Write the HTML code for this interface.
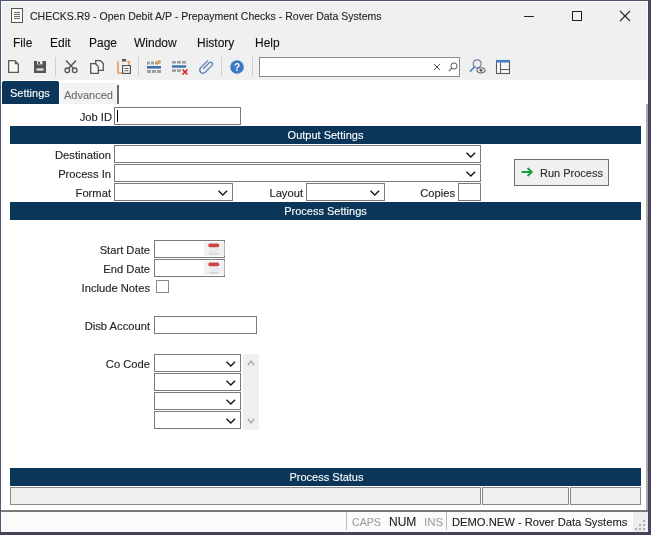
<!DOCTYPE html>
<html><head><meta charset="utf-8">
<style>
*{box-sizing:border-box;margin:0;padding:0}
html,body{will-change:transform;width:651px;height:535px;overflow:hidden;background:#f0f0f0;font-family:"Liberation Sans",sans-serif;color:#222}
.a{position:absolute}
.t{-webkit-text-stroke:0.1px currentColor;position:absolute;white-space:nowrap;font-size:11px;line-height:13px}
.l{-webkit-text-stroke:0.15px #262626;position:absolute;white-space:nowrap;font-size:11.2px;line-height:13px;color:#262626;text-align:right;width:140px}
.b{position:absolute;background:#fff;border:1px solid #7a7a7a}
.h{-webkit-text-stroke:0.1px #fff;position:absolute;left:10px;width:631px;height:18px;background:#0b3659;color:#fff;font-size:11px;line-height:18px;text-align:center}
.sep{position:absolute;top:57px;width:1px;height:19px;background:#cfcfcf}
svg{position:absolute;overflow:visible}
</style></head><body>
<!-- window frame -->
<div class="a" style="left:0;top:0;width:651px;height:1px;background:#4e566c"></div>
<div class="a" style="left:0;top:0;width:1px;height:535px;background:#4a5a78"></div>
<div class="a" style="left:648px;top:0;width:3px;height:535px;background:#4a4560"></div>
<div class="a" style="left:0;top:532px;width:651px;height:3px;background:#4a4058"></div>

<!-- title -->
<svg style="left:11px;top:8px" width="12" height="15" viewBox="0 0 12 15">
<rect x="0.5" y="0.5" width="11" height="14" fill="#fafafa" stroke="#555"/>
<path d="M3 4.5h6M3 6.5h6M3 8.5h6M3 10.5h6" stroke="#666" stroke-width="1"/>
</svg>
<div class="t" style="left:30px;top:9px;font-size:11.6px;line-height:14px;transform:scaleX(0.907);transform-origin:0 0;color:#222">CHECKS.R9 - Open Debit A/P - Prepayment Checks - Rover Data Systems</div>
<div class="a" style="left:524px;top:16px;width:10px;height:1px;background:#222"></div>
<div class="a" style="left:572px;top:11px;width:10px;height:10px;border:1px solid #222"></div>
<svg style="left:620px;top:11px" width="10" height="10" viewBox="0 0 10 10"><path d="M0 0L10 10M10 0L0 10" stroke="#222" stroke-width="1.1"/></svg>

<!-- menu -->
<div class="t" style="left:13px;top:37px;font-size:12px;color:#111">File</div>
<div class="t" style="left:50px;top:37px;font-size:12px;color:#111">Edit</div>
<div class="t" style="left:89px;top:37px;font-size:12px;color:#111">Page</div>
<div class="t" style="left:134px;top:37px;font-size:12px;color:#111">Window</div>
<div class="t" style="left:197px;top:37px;font-size:12px;color:#111">History</div>
<div class="t" style="left:255px;top:37px;font-size:12px;color:#111">Help</div>

<!-- toolbar icons -->
<svg style="left:8px;top:60px" width="11" height="13" viewBox="0 0 11 13"><path d="M0.65 0.65H6.8L10.35 4.2V12.35H0.65Z" fill="#f8f8f8" stroke="#5a5a5a" stroke-width="1.3"/><path d="M6.8 0.65V4.2H10.35Z" fill="#5a5a5a"/></svg>
<svg style="left:34px;top:61px" width="12" height="12" viewBox="0 0 12 12"><path d="M0 0H12V12H0Z" fill="#555"/><rect x="3" y="0" width="5.5" height="3.4" fill="#e8e8e8"/><rect x="4" y="0.7" width="2" height="2.2" fill="#555"/><rect x="2.5" y="7.4" width="7" height="2.2" fill="#e8e8e8"/></svg>
<div class="sep" style="left:55px"></div>
<svg style="left:64px;top:60px" width="14" height="14" viewBox="0 0 14 14"><path d="M2 0.5L9.5 8.5M12 0.5L4.5 8.5" stroke="#555" stroke-width="1.4"/><circle cx="3.3" cy="10.3" r="2.3" fill="none" stroke="#555" stroke-width="1.3"/><circle cx="10.7" cy="10.3" r="2.3" fill="none" stroke="#555" stroke-width="1.3"/></svg>
<svg style="left:90px;top:60px" width="14" height="14" viewBox="0 0 14 14"><path d="M5.7 0.7H10.5L13.3 3.5V10.3H5.7Z" fill="#f4f4f4" stroke="#555" stroke-width="1.3"/><path d="M0.7 3.7H5.5L8.3 6.5V13.3H0.7Z" fill="#f4f4f4" stroke="#555" stroke-width="1.3"/></svg>
<svg style="left:117px;top:59px" width="14" height="15" viewBox="0 0 14 15"><path d="M1 2.5V14H5M10 2.5H12V6" fill="none" stroke="#e0a050" stroke-width="1.6"/><rect x="5" y="0" width="4" height="2.5" fill="#555"/><rect x="5.6" y="6.6" width="7.8" height="7.8" fill="#fff" stroke="#555" stroke-width="1.2"/><path d="M7.5 9.5H11.5M7.5 11.7H11.5" stroke="#555" stroke-width="1"/></svg>
<div class="sep" style="left:138px"></div>
<svg style="left:146px;top:60px" width="16" height="14" viewBox="0 0 16 14"><rect x="1" y="1.5" width="3" height="3" fill="#a0a0a0"/><rect x="5" y="1.5" width="3" height="3" fill="#a0a0a0"/><rect x="9" y="1.5" width="3" height="3" fill="#a0a0a0"/><circle cx="13" cy="2" r="2" fill="#e8a050"/><rect x="1" y="6" width="14" height="2.6" fill="#3d6fb0"/><rect x="1" y="10" width="4" height="3" fill="#a0a0a0"/><rect x="6" y="10" width="4" height="3" fill="#a0a0a0"/><rect x="11" y="10" width="4" height="3" fill="#a0a0a0"/></svg>
<svg style="left:171px;top:60px" width="18" height="15" viewBox="0 0 18 15"><rect x="1" y="1" width="4" height="2.6" fill="#a0a0a0"/><rect x="6" y="1" width="4" height="2.6" fill="#a0a0a0"/><rect x="11" y="1" width="4" height="2.6" fill="#a0a0a0"/><rect x="1" y="5.3" width="14" height="2.4" fill="#3d6fb0"/><rect x="1" y="9.3" width="4" height="2.6" fill="#a0a0a0"/><rect x="6" y="9.3" width="4" height="2.6" fill="#a0a0a0"/><path d="M11.5 9.5L16.5 14.5M16.5 9.5L11.5 14.5" stroke="#d0202a" stroke-width="1.6"/></svg>
<svg style="left:199px;top:59px" width="15" height="15" viewBox="0 0 15 15"><path d="M4.5 9.5L10.3 3.7A1.9 1.9 0 0 1 13 6.4L6 13.4A3.2 3.2 0 0 1 1.5 8.9L8.5 1.9" fill="none" stroke="#5b80b8" stroke-width="1.3" stroke-linecap="round"/></svg>
<div class="sep" style="left:221px"></div>
<svg style="left:230px;top:60px" width="14" height="14" viewBox="0 0 14 14"><circle cx="7" cy="7" r="6.8" fill="#3a78c4"/><text x="7" y="11" font-family="Liberation Sans" font-weight="bold" font-size="10" text-anchor="middle" fill="#fff">?</text></svg>
<div class="sep" style="left:252px"></div>
<div class="a" style="left:259px;top:57px;width:201px;height:20px;background:#fff;border:1px solid #8a8a8a"></div>
<svg style="left:434px;top:64px" width="6" height="6" viewBox="0 0 6 6"><path d="M0 0L6 6M6 0L0 6" stroke="#555" stroke-width="1"/></svg>
<svg style="left:448px;top:62px" width="10" height="10" viewBox="0 0 10 10"><circle cx="6" cy="4" r="3.1" fill="none" stroke="#555" stroke-width="1"/><path d="M3.8 6.2L0.8 9.2" stroke="#555" stroke-width="1.1"/></svg>
<svg style="left:469px;top:59px" width="17" height="15" viewBox="0 0 17 15"><circle cx="8.2" cy="4.8" r="4" fill="none" stroke="#6f84a0" stroke-width="1.2"/><path d="M5.3 8L1.5 12.2" stroke="#4a86c6" stroke-width="1.8" stroke-linecap="round"/><ellipse cx="12" cy="11.3" rx="4" ry="2.6" fill="#f0f0f0" stroke="#6a6a6a" stroke-width="1.1"/><circle cx="12" cy="11.3" r="1.4" fill="#555"/></svg>
<svg style="left:496px;top:60px" width="14" height="14" viewBox="0 0 14 14"><rect x="0.5" y="0.5" width="13" height="13" fill="#f6f6f6" stroke="#5a5a5a" stroke-width="1.1"/><rect x="0" y="0" width="14" height="2.5" fill="#3f7cc4"/><path d="M4.5 2.5V13.4M4.5 9.5H13.4" stroke="#5a5a5a" stroke-width="1"/></svg>

<!-- content -->
<div class="a" style="left:1px;top:80px;width:647px;height:430px;background:#fff"></div>
<div class="a" style="left:2px;top:81px;width:57px;height:23px;background:#0b3659;border-radius:2px 2px 0 0"></div>
<div class="t" style="left:10px;top:87px;color:#fff;font-size:11px">Settings</div>
<div class="a" style="left:60px;top:83px;width:57px;height:21px;background:#f3f3f3"></div>
<div class="a" style="left:117px;top:85px;width:2px;height:19px;background:#6a6a6a"></div>
<div class="t" style="left:64px;top:89px;color:#6d6d6d;font-size:11px">Advanced</div>

<div class="l" style="left:-28px;top:111px">Job ID</div>
<div class="b" style="left:114px;top:107px;width:127px;height:18px"></div>
<div class="a" style="left:117px;top:110px;width:1px;height:12px;background:#000"></div>

<div class="h" style="top:126px">Output Settings</div>
<div class="l" style="left:-29px;top:149px">Destination</div>
<div class="b" style="left:114px;top:145px;width:367px;height:18px"></div>
<div class="l" style="left:-29px;top:168px">Process In</div>
<div class="b" style="left:114px;top:164px;width:367px;height:18px"></div>
<div class="l" style="left:-29px;top:187px">Format</div>
<div class="b" style="left:114px;top:183px;width:119px;height:18px"></div>
<div class="l" style="left:163px;top:187px">Layout</div>
<div class="b" style="left:306px;top:183px;width:79px;height:18px"></div>
<div class="l" style="left:315px;top:187px">Copies</div>
<div class="b" style="left:458px;top:183px;width:23px;height:18px"></div>

<div class="a" style="left:514px;top:159px;width:95px;height:27px;background:#f0f0f0;border:1px solid #707070"></div>
<svg style="left:521px;top:167px" width="12" height="10" viewBox="0 0 12 10"><path d="M0.5 5H10.5M6.5 1L10.8 5L6.5 9" fill="none" stroke="#1f9a3a" stroke-width="1.8"/></svg>
<div class="t" style="left:540px;top:167px;color:#2a2a2a;font-size:11px">Run Process</div>

<div class="h" style="top:202px">Process Settings</div>
<div class="l" style="left:10px;top:244px">Start Date</div>
<div class="b" style="left:154px;top:240px;width:71px;height:18px"></div>
<div class="l" style="left:10px;top:263px">End Date</div>
<div class="b" style="left:154px;top:259px;width:71px;height:18px"></div>
<div class="l" style="left:10px;top:282px">Include Notes</div>
<div class="a" style="left:156px;top:280px;width:13px;height:13px;background:#fff;border:1px solid #8a8a8a"></div>
<div class="l" style="left:10px;top:320px">Disb Account</div>
<div class="b" style="left:154px;top:316px;width:103px;height:18px"></div>
<div class="l" style="left:10px;top:358px">Co Code</div>
<div class="b" style="left:154px;top:354px;width:87px;height:18px"></div>
<div class="b" style="left:154px;top:373px;width:87px;height:18px"></div>
<div class="b" style="left:154px;top:392px;width:87px;height:18px"></div>
<div class="b" style="left:154px;top:411px;width:87px;height:18px"></div>
<div class="a" style="left:243px;top:354px;width:16px;height:76px;background:#f0f0f0"></div>

<div class="h" style="top:468px;padding-left:2px">Process Status</div>
<div class="a" style="left:10px;top:487px;width:471px;height:18px;background:#f0f0f0;border:1px solid #8a8a8a"></div>
<div class="a" style="left:482px;top:487px;width:87px;height:18px;background:#f0f0f0;border:1px solid #8a8a8a"></div>
<div class="a" style="left:570px;top:487px;width:71px;height:18px;background:#f0f0f0;border:1px solid #8a8a8a"></div>

<div class="a" style="left:646px;top:104px;width:2px;height:406px;background:#aaaaaa"></div>
<div class="a" style="left:1px;top:1px;width:647px;height:1px;background:#fbfbfd"></div>
<div class="a" style="left:1px;top:1px;width:1px;height:79px;background:#fbfbfd"></div>
<div class="a" style="left:647px;top:1px;width:1px;height:103px;background:#fbfbfd"></div>
<!-- status bar -->
<div class="a" style="left:1px;top:510px;width:647px;height:2px;background:#7a7a7a"></div>
<div class="a" style="left:1px;top:512px;width:647px;height:20px;background:#fbfbfb"></div>
<div class="a" style="left:346px;top:512px;width:1px;height:18px;background:#bdbdbd"></div>
<div class="a" style="left:446px;top:512px;width:1px;height:18px;background:#bdbdbd"></div>
<div class="t" style="left:352px;top:516px;color:#a0a0a0;font-size:10.6px">CAPS</div>
<div class="t" style="left:389px;top:516px;color:#222;font-size:12px">NUM</div>
<div class="t" style="left:424px;top:516px;color:#a0a0a0;font-size:11.5px">INS</div>
<div class="t" style="left:452px;top:516px;color:#222;font-size:11.2px">DEMO.NEW - Rover Data Systems</div>

<!-- chevrons -->
<svg style="left:466px;top:152px" width="10" height="6" viewBox="0 0 10 6"><path d="M0.5 0.7L4.8 5L9.1 0.7" fill="none" stroke="#111" stroke-width="1.3"/></svg>
<svg style="left:466px;top:171px" width="10" height="6" viewBox="0 0 10 6"><path d="M0.5 0.7L4.8 5L9.1 0.7" fill="none" stroke="#111" stroke-width="1.3"/></svg>
<svg style="left:218px;top:190px" width="10" height="6" viewBox="0 0 10 6"><path d="M0.5 0.7L4.8 5L9.1 0.7" fill="none" stroke="#111" stroke-width="1.3"/></svg>
<svg style="left:370px;top:190px" width="10" height="6" viewBox="0 0 10 6"><path d="M0.5 0.7L4.8 5L9.1 0.7" fill="none" stroke="#111" stroke-width="1.3"/></svg>
<svg style="left:226px;top:361px" width="10" height="6" viewBox="0 0 10 6"><path d="M0.5 0.7L4.8 5L9.1 0.7" fill="none" stroke="#111" stroke-width="1.3"/></svg>
<svg style="left:226px;top:380px" width="10" height="6" viewBox="0 0 10 6"><path d="M0.5 0.7L4.8 5L9.1 0.7" fill="none" stroke="#111" stroke-width="1.3"/></svg>
<svg style="left:226px;top:399px" width="10" height="6" viewBox="0 0 10 6"><path d="M0.5 0.7L4.8 5L9.1 0.7" fill="none" stroke="#111" stroke-width="1.3"/></svg>
<svg style="left:226px;top:418px" width="10" height="6" viewBox="0 0 10 6"><path d="M0.5 0.7L4.8 5L9.1 0.7" fill="none" stroke="#111" stroke-width="1.3"/></svg>
<!-- scroll arrows -->
<svg style="left:247px;top:360px" width="8" height="6" viewBox="0 0 8 6"><path d="M0.8 5.2L4 1.2L7.2 5.2" fill="none" stroke="#aaa" stroke-width="1.5"/></svg>
<svg style="left:247px;top:418px" width="8" height="6" viewBox="0 0 8 6"><path d="M0.8 0.8L4 4.8L7.2 0.8" fill="none" stroke="#aaa" stroke-width="1.5"/></svg>
<!-- calendar -->
<svg style="left:204px;top:242px" width="20" height="14" viewBox="0 0 20 14"><rect x="0" y="0" width="20.5" height="14" fill="#f1f1f1"/><rect x="4.3" y="1.6" width="11" height="3.6" rx="1.6" fill="#cc4646"/><path d="M5 7H15M5 9.3H15" stroke="#dde4ea" stroke-width="1"/><path d="M5 11.8H15" stroke="#c8c8c8" stroke-width="1"/></svg>
<svg style="left:204px;top:261px" width="20" height="14" viewBox="0 0 20 14"><rect x="0" y="0" width="20.5" height="14" fill="#f1f1f1"/><rect x="4.3" y="1.6" width="11" height="3.6" rx="1.6" fill="#cc4646"/><path d="M5 7H15M5 9.3H15" stroke="#dde4ea" stroke-width="1"/><path d="M5 11.8H15" stroke="#c8c8c8" stroke-width="1"/></svg>
<!-- grip -->
<div class="a" style="left:633px;top:512px;width:15px;height:20px;background:#ededed"></div>
<svg style="left:635px;top:520px" width="12" height="12" viewBox="0 0 12 12" fill="#b0b0b0"><rect x="8" y="0" width="2" height="2"/><rect x="4" y="4" width="2" height="2"/><rect x="8" y="4" width="2" height="2"/><rect x="0" y="8" width="2" height="2"/><rect x="4" y="8" width="2" height="2"/><rect x="8" y="8" width="2" height="2"/></svg>
</body></html>
